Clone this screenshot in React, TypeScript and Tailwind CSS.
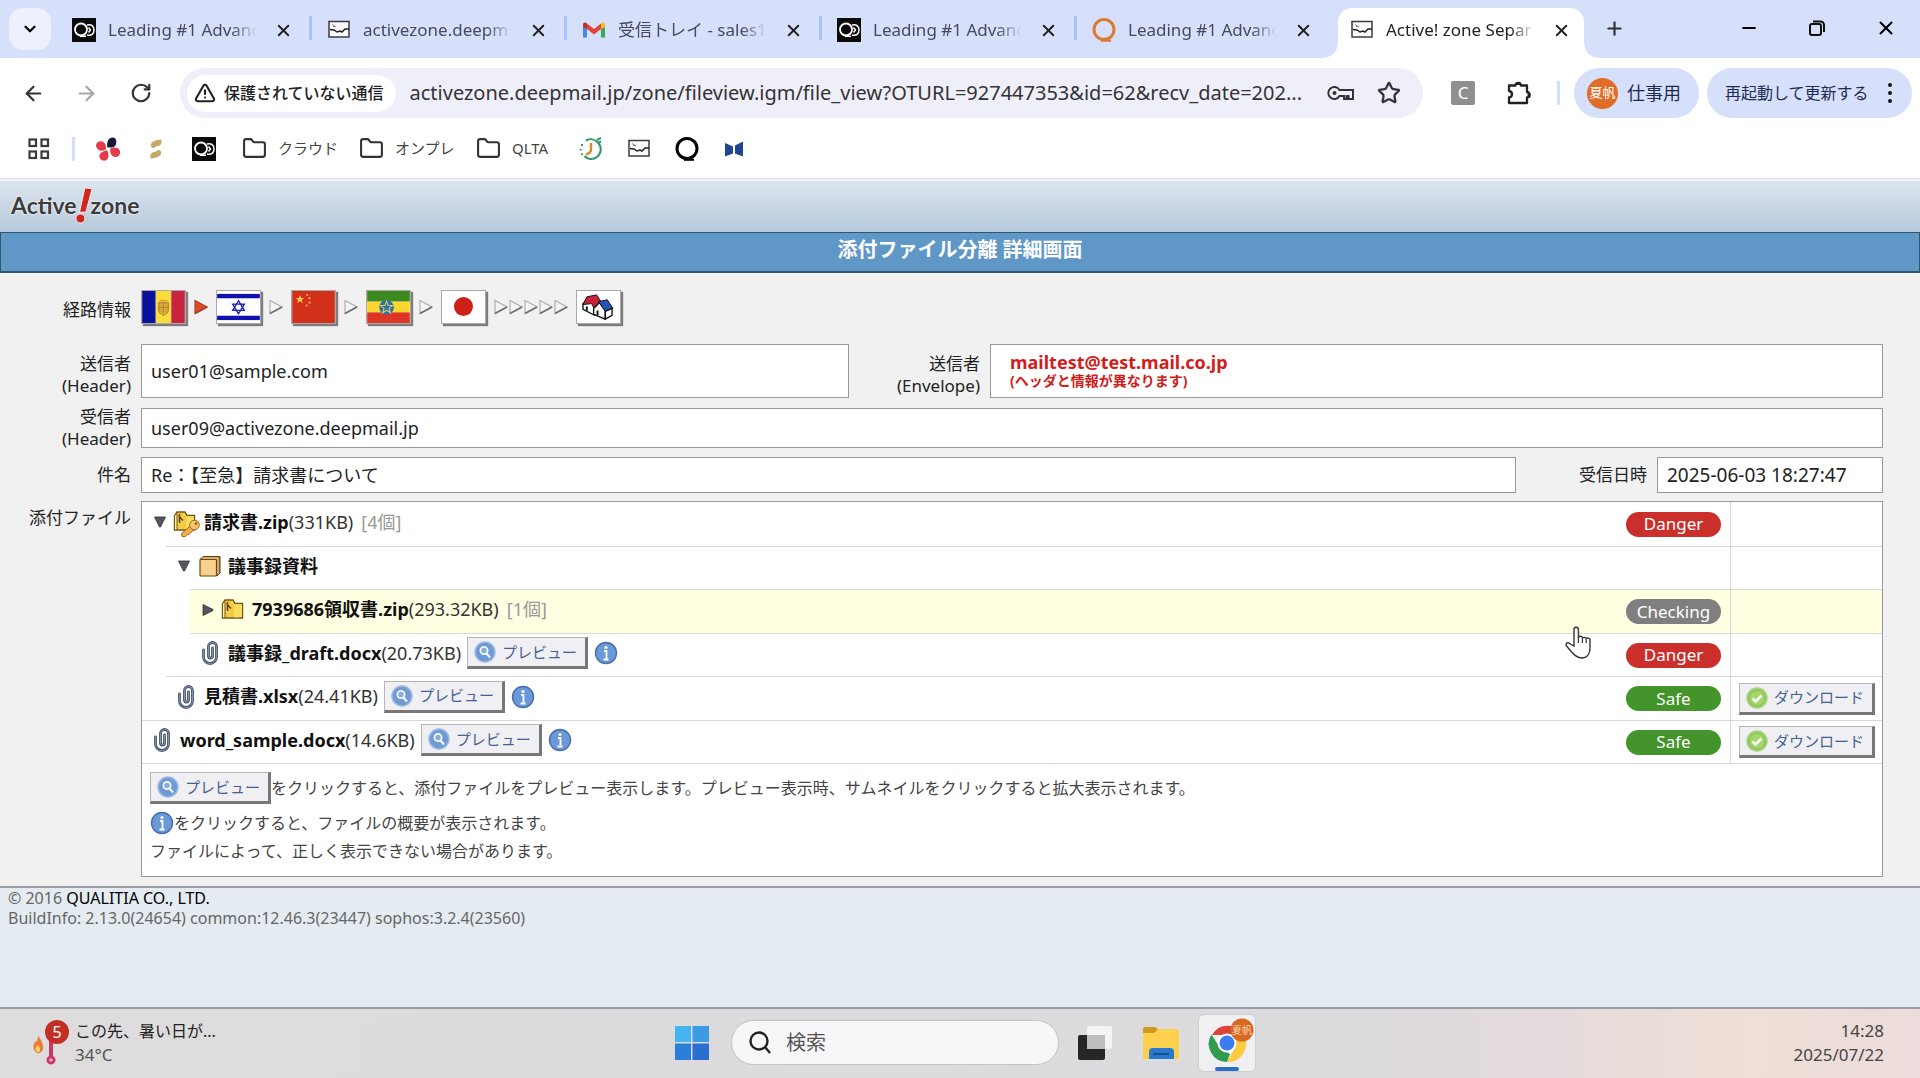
import type { ReactNode } from "react";
import {
  ArrowLeft,
  ArrowRight,
  ChevronDown,
  Folder,
  Minus,
  Plus,
  RotateCw,
  Star,
  TriangleAlert,
  X,
} from "lucide-react";

/* ---------- browser icons ---------- */

function OcIcon() {
  return (
    <svg viewBox="0 0 24 24" className="w-6 h-6 shrink-0">
      <rect width="24" height="24" fill="#0b0b0b" />
      <circle cx="9" cy="11.5" r="6" fill="none" stroke="#fff" strokeWidth="1.800" />
      <path d="M8 18.300h6" stroke="#fff" strokeWidth="1.500" />
      <path d="M15 7c5-1 7 1.500 7 5s-2 6-7 5M16.500 9.500l2 2.500-2 2.500" fill="none" stroke="#fff" strokeWidth="1.500" />
    </svg>
  );
}

function MailBoxIcon() {
  return (
    <svg viewBox="0 0 22 20" className="w-[22px] h-5 shrink-0" fill="none" stroke="#3c3c3c" strokeWidth="1.500">
      <rect x="1" y="1.500" width="20" height="15.500" fill="#fafafa" />
      <path d="M2 9.500l4 .5 3 2 3-1 2 1 3-3 4 0" stroke="#222" />
      <path d="M4 4.500l4 2.500M5 6.500h3" strokeWidth="1" stroke="#888" />
    </svg>
  );
}

function GmailIcon() {
  return (
    <svg viewBox="0 0 24 18" className="w-6 h-[18px] shrink-0">
      <path d="M1 3v13.500h4V8z" fill="#4a82ee" />
      <path d="M23 3v13.500h-4V8z" fill="#3ba757" />
      <path d="M19 8V2.500c2-2 4-1 4 1V6z" fill="#f4bc1c" />
      <path d="M5 8V2.500C3 .5 1 1.500 1 3.500V6z" fill="#b93228" />
      <path d="M5 2.500l7 5.500 7-5.500V8l-7 5.500L5 8z" fill="#e24435" />
    </svg>
  );
}

function RingIcon({ color }: { color: string }) {
  return (
    <svg viewBox="0 0 24 24" className="w-6 h-6 shrink-0">
      <circle cx="12" cy="11.500" r="10" fill="none" stroke={color} strokeWidth="3" />
      <path d="M9 22.800h10" stroke={color} strokeWidth="2" />
    </svg>
  );
}

function AppsIcon() {
  return (
    <svg viewBox="0 0 22 22" className="w-[22px] h-[22px]" fill="none" stroke="#3a3a3a" strokeWidth="2.200">
      <rect x="1.500" y="1.500" width="6.500" height="6.500" />
      <rect x="13.500" y="1.500" width="6.500" height="6.500" />
      <rect x="1.500" y="13.500" width="6.500" height="6.500" />
      <rect x="13.500" y="13.500" width="6.500" height="6.500" />
    </svg>
  );
}

function PetalIcon() {
  return (
    <svg viewBox="0 0 26 24" className="w-[26px] h-6">
      <path d="M12.500 10.500c-1-4 0-9.500 4.500-10 5-.5 5 5 3.500 8-2 2.500-5 2-8 2z" fill="#17183a" />
      <path d="M11 12C8 15 2 14 1 9c0-5 5-6 8-3.500 2 2 2 4 2 6.500z" fill="#e23b4a" />
      <path d="M12.500 13.500c1 3 2 7-1 9.500-4 2-8-1-7-5 1-3 5-4.500 8-4.500z" fill="#e23b4a" />
      <path d="M15 12c3-2 7-2 9.500 1 2 4-1 7-4 7-4 0-5.500-4-5.500-8z" fill="#e23b4a" />
    </svg>
  );
}

function SandIcon() {
  return (
    <svg viewBox="0 0 12 20" className="w-3 h-5" fill="#c5a962">
      <path d="M11.500 .5c.5 4-1 6.500-4 6.500-2 0-2 1.500-4 2C.5 9 0 5.500 2 3.500 4 1.500 8 .5 11.500.5z" />
      <path d="M.5 19.500c-.5-4 1-6.500 4-6.500 2 0 2-1.500 4-2 3 0 3.500 3.500 1.500 5.500-2 2-6 3-9.500 3z" />
    </svg>
  );
}

function ClockIcon() {
  return (
    <svg viewBox="0 0 24 24" className="w-6 h-6" fill="none" strokeWidth="2">
      <path d="M7 3.500c4-2 9-1.500 12 2 4 4.500 3.500 11-1 14.500s-10 2-12.500-1" stroke="#2f9a68" />
      <path d="M3 7v2M1.500 12v1.500M3 16.500v1.500M18 3l4-2M20 5.500l2-1" stroke="#2f9a68" />
      <path d="M12 6v6.500c0 2-2 4-5 5" stroke="#d08a2a" strokeWidth="2.400" />
    </svg>
  );
}

function BookIcon() {
  return (
    <svg viewBox="0 0 20 16" className="w-5 h-4" fill="#1f4590">
      <path d="M1 2l8 3.500v7L1 15.500z" />
      <path d="M11 4.500L19 .5v15l-8-3z" />
    </svg>
  );
}

function KeyIcon() {
  return (
    <svg viewBox="0 0 28 18" className="w-7 h-[18px]" fill="none" stroke="#333" strokeWidth="2">
      <path d="M12.500 6a6 6 0 1 0 0 6h4.500v3h2.500v-3h2v3H26V6z" />
      <circle cx="7.500" cy="9" r="2" fill="#333" stroke="none" />
    </svg>
  );
}

function PuzzleIcon() {
  return (
    <svg viewBox="0 0 26 26" className="w-[26px] h-[26px]">
      <path
        d="M3 5.500h6.500a2.700 2.700 0 0 1 5.400 0H21v6.500a2.700 2.700 0 0 1 0 5.400V23H3v-5.500c4-.5 4-6 0-6.500z"
        fill="none"
        stroke="#222"
        strokeWidth="2.300"
        strokeLinejoin="round"
      />
      <path d="M9.500 5a2.700 2.700 0 0 1 5.400 0zM21.500 12a2.700 2.700 0 0 1 0 5.400z" fill="#222" />
    </svg>
  );
}

function RestoreIcon() {
  return (
    <svg viewBox="0 0 18 18" className="w-[18px] h-[18px]" fill="none" stroke="#111" strokeWidth="2">
      <rect x="2" y="5" width="11" height="11" rx="2" />
      <path d="M5 2.500h7.500a3.500 3.500 0 0 1 3.500 3.500v7" />
    </svg>
  );
}

/* ---------- page icons ---------- */

function Flag({ title, children }: { title: string; children: ReactNode }) {
  return (
    <svg
      viewBox="0 0 44 33"
      role="img"
      aria-label={title}
      className="w-[45px] h-[34px] border border-[#a9a9a9] shadow-[2px_2px_1px_#7d7d7d] bg-white"
    >
      {children}
    </svg>
  );
}

function Andorra() {
  return (
    <Flag title="Andorra">
      <rect width="14" height="33" fill="#0a119c" />
      <rect x="14" width="16" height="33" fill="#fbdc3d" />
      <rect x="30" width="14" height="33" fill="#c8243f" />
      <circle cx="22" cy="17" r="6" fill="#d6a93c" />
      <path d="M17 12h10v7c0 4-3 5-5 6-2-1-5-2-5-6z" fill="none" stroke="#b8862c" strokeWidth="1.200" />
      <path d="M22 12v12M17 17h10M18 10h8" stroke="#b8862c" />
    </Flag>
  );
}

function Israel() {
  return (
    <Flag title="Israel">
      <rect y="3" width="44" height="4.500" fill="#0f10ae" />
      <rect y="25.500" width="44" height="4.500" fill="#0f10ae" />
      <path d="M22 10l6 10H16zM22 23.500l-6-10h12z" fill="none" stroke="#2122b4" strokeWidth="1.400" />
    </Flag>
  );
}

function China() {
  return (
    <Flag title="China">
      <rect width="44" height="33" fill="#d3301b" />
      <path d="M8 4l1.200 3.200h3.300l-2.600 2 1 3.300L8 10.500l-2.900 2 1-3.300-2.600-2h3.300z" fill="#f9c646" />
      <g fill="#f0a040">
        <circle cx="15.500" cy="4" r="1.200" />
        <circle cx="18" cy="7.500" r="1.200" />
        <circle cx="18" cy="12" r="1.200" />
        <circle cx="15" cy="15" r="1.200" />
      </g>
    </Flag>
  );
}

function Ethiopia() {
  return (
    <Flag title="Ethiopia">
      <rect width="44" height="11" fill="#3c8a1f" />
      <rect y="11" width="44" height="11" fill="#fad72f" />
      <rect y="22" width="44" height="11" fill="#de3624" />
      <circle cx="20" cy="17" r="7.500" fill="#2f6fa9" />
      <path
        d="M20 10.500l1.700 4.500h4.700l-3.800 3 1.500 4.600-4.100-2.800-4.100 2.800 1.500-4.600-3.800-3h4.700z"
        fill="none"
        stroke="#d8cf62"
        strokeWidth="1.100"
      />
    </Flag>
  );
}

function Japan() {
  return (
    <Flag title="Japan">
      <circle cx="22" cy="16" r="9.800" fill="#cf2018" />
    </Flag>
  );
}

function House() {
  return (
    <Flag title="Local">
      <path d="M6 13v6l12 6V14l-4-7z" fill="#fff" stroke="#111" strokeWidth="1.400" />
      <path d="M10 6l10-2 6 9-8 6-3-6-9 1z" fill="#c81f3a" stroke="#111" />
      <path d="M17 18l6-6 6 8v9l-12-5z" fill="#fff" stroke="#111" strokeWidth="1.400" />
      <path d="M22 11l9-2 6 9-8 3z" fill="#2453b5" stroke="#111" />
      <path d="M29 21l7-3v7l-7 4z" fill="#fff" stroke="#111" strokeWidth="1.400" />
      <path d="M10 16v4M21 20v5" stroke="#111" strokeWidth="2" />
    </Flag>
  );
}

function RouteArrow({ red = false }: { red?: boolean }) {
  return (
    <svg viewBox="0 0 14 16" className="w-3.5 h-4 shrink-0">
      <path d="M1 1.500v13L13 8z" fill={red ? "#dc4a2b" : "#f4f4f4"} />
      <path
        d="M1 1.500v13L13 8z"
        fill="none"
        stroke={red ? "#a9442c" : "#b0b0b0"}
        strokeWidth="1.200"
      />
      <path d="M1 14.500L13 8" stroke={red ? "#a9442c" : "#707070"} strokeWidth="1.800" />
    </svg>
  );
}

function Logo() {
  return (
    <a
      href="#"
      aria-label="Active! zone"
      className="flex items-center font-[Lato,sans-serif] text-[23px] leading-7 font-bold text-[#3b3b3d] [text-shadow:0_0_2px_white,0_0_2px_white]"
    >
      Active
      <svg viewBox="0 0 20 42" className="-mx-0.5 h-10 w-[18px]">
        <path d="M11 2l8 1-7 26H5z" fill="#d1261f" stroke="#f6f6f6" />
        <circle cx="6" cy="36" r="5" fill="#d1261f" stroke="#f6f6f6" />
      </svg>
      zone
    </a>
  );
}

function Caret({ open }: { open: boolean }) {
  return (
    <svg viewBox="0 0 12 12" className="w-3 h-3 shrink-0" fill="#56565c" stroke="#2e2e32" strokeWidth=".8">
      {open ? <path d="M.5 1h11L6.500 11h-1z" /> : <path d="M1 .5v11l10-5v-1z" />}
    </svg>
  );
}

function ZipIcon({ locked = false }: { locked?: boolean }) {
  return (
    <svg viewBox="0 0 28 30" className="w-7 h-[30px] shrink-0">
      <path d="M2.500 9L5 5h8l2 3.500h7.500V23h-20z" fill="#f5cb45" stroke="#75561a" strokeWidth="1.400" />
      <path d="M2.500 9L5 5.500V23H2.500z" fill="#fff1a8" stroke="#75561a" />
      <path d="M14 9l8 .5V22l-8 .5z" fill="#fbdd62" />
      <path d="M7.500 7v9M7.500 10l3.500 3.500" fill="none" stroke="#5b420f" strokeWidth="1.500" />
      {locked && (
        <g stroke="#a26a1c">
          <path d="M19 18.500L9.500 26.500l.5 3 3.500 0 1.500-2h2l5-5z" fill="#f2b04a" />
          <circle cx="22.500" cy="18" r="4.800" fill="#f7c56c" />
          <circle cx="24" cy="16.500" r="1.300" fill="#8a5510" stroke="none" />
        </g>
      )}
    </svg>
  );
}

function FolderIcon() {
  return (
    <svg viewBox="0 0 22 22" className="w-[22px] h-[22px] shrink-0">
      <path d="M1 4.500L4 1.500h17V18l-3 3z" fill="#b27b35" stroke="#5d3b12" strokeLinejoin="round" />
      <path d="M3 3h16v16" fill="none" stroke="#f5dfb4" />
      <rect x="1" y="4.500" width="16.500" height="16.500" rx="1" fill="#f9cf8c" stroke="#6e4717" strokeWidth="1.200" />
    </svg>
  );
}

function ClipIcon() {
  return (
    <svg viewBox="0 0 18 24" className="w-[18px] h-6 shrink-0" fill="none" strokeLinecap="round">
      <path d="M2.500 9v7a6.500 6.500 0 0 0 13 0V5.500a4 4 0 0 0-8 0V15a2 2 0 0 0 4 0V7" stroke="#46536b" strokeWidth="2.800" />
      <path d="M2.500 9v7a6.500 6.500 0 0 0 13 0V5.500a4 4 0 0 0-8 0V15a2 2 0 0 0 4 0V7" stroke="#93a3bd" strokeWidth=".8" />
    </svg>
  );
}

function MagnifierIcon() {
  return (
    <svg viewBox="0 0 22 22" className="w-[22px] h-[22px] shrink-0">
      <circle cx="11" cy="11" r="10" fill="#6f9ad4" stroke="#9dbbe2" strokeWidth="1.500" />
      <circle cx="10" cy="9.500" r="3.600" fill="#86abdd" stroke="#f2f7fd" strokeWidth="1.800" />
      <path d="M12.500 12.500l3.500 4" stroke="#f2f7fd" strokeWidth="2.200" />
    </svg>
  );
}

function CheckIcon() {
  return (
    <svg viewBox="0 0 22 22" className="w-[22px] h-[22px] shrink-0">
      <circle cx="11" cy="11" r="10" fill="#8fc95c" stroke="#a9d482" strokeWidth="1.500" />
      <circle cx="11" cy="11" r="7" fill="#a5d76b" />
      <path d="M6.500 11.500l3 3 6-6" fill="none" stroke="#fff" strokeWidth="2.500" />
    </svg>
  );
}

function InfoIcon() {
  return (
    <svg viewBox="0 0 24 24" className="w-6 h-6 shrink-0">
      <circle cx="12" cy="12" r="10.500" fill="#6b98d8" stroke="#4a6ea8" strokeWidth="1.400" />
      <circle cx="12" cy="6.500" r="1.500" fill="#fff" />
      <path d="M10 10h2.500v8M9.500 18.500h5" fill="none" stroke="#fff" strokeWidth="1.800" />
    </svg>
  );
}

function HandCursor() {
  return (
    <svg viewBox="0 0 26 34" className="w-[26px] h-[34px] absolute -left-[61px] top-9 z-10">
      <path
        d="M9 20V3.500a2.200 2.200 0 0 1 4.400 0V12a2 2 0 0 1 4 .5 2 2 0 0 1 3.800.8 2 2 0 0 1 3.800 1.200V22c0 6-3 10-8.500 10C12 32 9 29 1.500 20c-1.500-3 1.500-4.500 4-2z"
        fill="#fff"
        stroke="#333"
        strokeWidth="1.400"
      />
      <path d="M13.400 12v5M17.400 12.500V17M21.200 13.500V17" stroke="#333" strokeWidth="1.200" />
    </svg>
  );
}

/* ---------- browser frame ---------- */

const tabs: { title: string; icon: ReactNode; active?: boolean }[] = [
  { title: "Leading #1 Advanc", icon: <OcIcon /> },
  { title: "activezone.deepm", icon: <MailBoxIcon /> },
  { title: "受信トレイ - sales1", icon: <GmailIcon /> },
  { title: "Leading #1 Advanc", icon: <OcIcon /> },
  { title: "Leading #1 Advanc", icon: <RingIcon color="#dd7a33" /> },
  { title: "Active! zone Separ", icon: <MailBoxIcon />, active: true },
];

function TabStrip() {
  return (
    <div className="flex h-[58px] bg-[#d7e0fa] pl-[9px] text-[17px] text-[#45495a]">
      <button
        aria-label="タブを検索"
        className="mt-2 mr-[6px] flex h-[42px] w-[42px] shrink-0 items-center justify-center rounded-[14px] bg-[#edf1fd] text-black"
      >
        <ChevronDown size={18} strokeWidth={3} />
      </button>
      <div className="flex min-w-0">
        {tabs.map((tab, i) => (
          <div
            key={i}
            className={
              tab.active
                ? "relative mt-2 ml-1.5 flex h-[50px] w-[246px] items-center rounded-t-[14px] bg-white pb-1.5 pl-3 text-[#222]"
                : "relative mt-2 flex h-[50px] w-[255px] items-center pb-1.5 pl-[15px]"
            }
          >
            <span className="flex w-6 shrink-0 justify-center">{tab.icon}</span>
            <span className="ml-3 w-[154px] overflow-hidden whitespace-nowrap [mask-image:linear-gradient(to_right,black_80%,transparent_97%)]">
              {tab.title}
            </span>
            <button aria-label="閉じる" className="ml-3 text-[#222]">
              <X size={19} strokeWidth={2.5} />
            </button>
            {!tab.active && i !== 4 && (
              <span className="absolute top-2 right-0 h-6 w-[3px] bg-[#a9c4f4]" />
            )}
            {tab.active && (
              <>
                <span className="absolute bottom-0 -left-3.5 h-3.5 w-3.5 bg-[radial-gradient(circle_at_0_0,#d7e0fa_13px,white_14px)]" />
                <span className="absolute -right-3.5 bottom-0 h-3.5 w-3.5 bg-[radial-gradient(circle_at_100%_0,#d7e0fa_13px,white_14px)]" />
              </>
            )}
          </div>
        ))}
      </div>
      <button aria-label="新しいタブ" className="ml-[20px] h-14 text-[#333]">
        <Plus size={21} strokeWidth={2.5} />
      </button>
      <div className="ml-auto flex h-14 shrink-0 items-center gap-[49px] pr-[23px] text-black">
        <button aria-label="最小化">
          <Minus size={20} strokeWidth={2.5} />
        </button>
        <button aria-label="元に戻す">
          <RestoreIcon />
        </button>
        <button aria-label="ウィンドウを閉じる">
          <X size={22} strokeWidth={2.2} />
        </button>
      </div>
    </div>
  );
}

function Toolbar() {
  return (
    <div className="flex h-[70px] items-center bg-white pr-2 pl-[22px]">
      <button aria-label="戻る" className="text-[#333]">
        <ArrowLeft size={23} strokeWidth={2.3} />
      </button>
      <button aria-label="進む" className="ml-[30px] text-[#a5a5a5]">
        <ArrowRight size={23} strokeWidth={2.3} />
      </button>
      <button aria-label="再読み込み" className="ml-[32px] text-[#333]">
        <RotateCw size={22} strokeWidth={2.4} />
      </button>
      <div className="ml-[28px] flex h-[50px] min-w-0 flex-1 items-center rounded-full bg-[#efeffa] pr-[22px] pl-[7px]">
        <button className="flex h-[37px] shrink-0 items-center gap-2 rounded-full bg-white px-[7px] pr-3 text-[16px] font-medium text-[#222]">
          <TriangleAlert size={22} strokeWidth={2.3} />
          保護されていない通信
        </button>
        <input
          aria-label="アドレス"
          readOnly
          value="activezone.deepmail.jp/zone/fileview.igm/file_view?OTURL=927447353&id=62&recv_date=202..."
          className="ml-3.5 min-w-0 flex-1 bg-transparent text-[20px] text-[#333] outline-none"
        />
        <button aria-label="パスワード" className="ml-2">
          <KeyIcon />
        </button>
        <button aria-label="ブックマーク" className="ml-[22px] text-[#333]">
          <Star size={24} strokeWidth={2.3} />
        </button>
      </div>
      <button className="ml-7 flex h-6 w-6 items-center justify-center rounded-[2px] bg-[#8f8f8f] text-[17px] text-white">C</button>
      <button aria-label="拡張機能" className="ml-[31px]">
        <PuzzleIcon />
      </button>
      <span className="ml-[25px] h-6 w-[3px] bg-[#d3e0fa]" />
      <button className="ml-[14px] flex h-[50px] w-[125px] items-center gap-[9px] rounded-full bg-[#d7e0fa] pl-[13px] text-[18px] whitespace-nowrap text-[#1d2b50]">
        <span className="flex h-[31px] w-[31px] items-center justify-center rounded-full bg-[#df6d27] text-[13px] text-white">
          夏帆
        </span>
        仕事用
      </button>
      <button className="ml-2 flex h-[50px] w-[205px] items-center justify-between rounded-full bg-[#d7e0fa] pr-5 pl-[18px] text-[16px] whitespace-nowrap text-[#1d2b50]">
        再起動して更新する
        <svg viewBox="0 0 4 22" className="h-[22px] w-1" fill="#111">
          <circle cx="2" cy="3" r="2" />
          <circle cx="2" cy="11" r="2" />
          <circle cx="2" cy="19" r="2" />
        </svg>
      </button>
    </div>
  );
}

function BookmarkFolder({ label }: { label: string }) {
  return (
    <a href="#" className="flex w-[117px] items-center gap-[11px]">
      <Folder size={25} strokeWidth={2} className="text-[#333]" />
      {label}
    </a>
  );
}

function Bookmarks() {
  return (
    <div className="flex h-[51px] items-center border-b border-[#dbe2ea] bg-white pb-[9px] pl-7 text-[15px] text-[#444]">
      <a href="#" aria-label="アプリ">
        <AppsIcon />
      </a>
      <span className="ml-[22px] h-6 w-[3px] bg-[#d3e0fa]" />
      <a href="#" aria-label="Petal" className="ml-5">
        <PetalIcon />
      </a>
      <a href="#" aria-label="S" className="ml-[29px]">
        <SandIcon />
      </a>
      <a href="#" aria-label="OC" className="mr-[26px] ml-[30px]">
        <OcIcon />
      </a>
      <BookmarkFolder label="クラウド" />
      <BookmarkFolder label="オンプレ" />
      <BookmarkFolder label="QLTA" />
      <div className="ml-[-14px] flex items-center gap-[25px]">
        <a href="#" aria-label="Clock">
          <ClockIcon />
        </a>
        <a href="#" aria-label="Mail">
          <MailBoxIcon />
        </a>
        <a href="#" aria-label="Q">
          <RingIcon color="#000" />
        </a>
        <a href="#" aria-label="Book">
          <BookIcon />
        </a>
      </div>
    </div>
  );
}

/* ---------- mail detail ---------- */

function Label({ children }: { children: ReactNode }) {
  return <div className="pr-2.5 text-right leading-[22px]">{children}</div>;
}

function Field({ children, className = "" }: { children: ReactNode; className?: string }) {
  return <div className={"flex items-center border border-[#999] bg-white px-[9px] " + className}>{children}</div>;
}

function PreviewButton() {
  return (
    <button className="inline-flex h-8 w-[121px] shrink-0 items-center gap-1.5 border-t border-r-[3px] border-b-[3px] border-l border-t-[#b5b5b5] border-r-[#777] border-b-[#777] border-l-[#b5b5b5] bg-[#f0eff4] pl-1.5 text-[15px] whitespace-nowrap text-[#456391]">
      <MagnifierIcon />
      プレビュー
    </button>
  );
}

function DownloadButton() {
  return (
    <button className="flex h-8 w-[136px] items-center gap-1.5 border-t border-r-[3px] border-b-[3px] border-l border-t-[#b5b5b5] border-r-[#777] border-b-[#777] border-l-[#b5b5b5] bg-[#f0eff4] pl-1.5 text-[15px] whitespace-nowrap text-[#456391]">
      <CheckIcon />
      ダウンロード
    </button>
  );
}

type Status = "Danger" | "Checking" | "Safe";

const statusColors: Record<Status, string> = {
  Danger: "bg-[#cb2f2c]",
  Checking: "bg-[#7f7f7f]",
  Safe: "bg-[#43942b]",
};

type FileRow = {
  name: string;
  size?: string;
  count?: string;
  icon: ReactNode;
  pad: string;
  line: string;
  open?: boolean;
  preview?: boolean;
  status?: Status;
  hover?: boolean;
};

const files: FileRow[] = [
  { name: "請求書.zip", size: "331KB", count: "4個", icon: <ZipIcon locked />, pad: "pl-3", line: "", open: true, status: "Danger" },
  { name: "議事録資料", icon: <FolderIcon />, pad: "pl-3", line: "ml-6 border-t", open: true },
  { name: "7939686領収書.zip", size: "293.32KB", count: "1個", icon: <ZipIcon />, pad: "pl-3", line: "ml-12 border-t", open: false, status: "Checking", hover: true },
  { name: "議事録_draft.docx", size: "20.73KB", icon: <ClipIcon />, pad: "pl-2", line: "ml-12 border-t", preview: true, status: "Danger" },
  { name: "見積書.xlsx", size: "24.41KB", icon: <ClipIcon />, pad: "pl-2", line: "ml-6 border-t", preview: true, status: "Safe" },
  { name: "word_sample.docx", size: "14.6KB", icon: <ClipIcon />, pad: "pl-2", line: "border-t", preview: true, status: "Safe" },
];

function FileTable() {
  return (
    <table className="w-full border-collapse text-[18px]">
      <tbody>
        {files.map((f, i) => {
          const height = i % 2 === 0 ? "h-11" : "h-[43px]";
          const line = f.line ? " border-t" : "";
          const bg = f.hover ? " bg-[#ffffe1]" : "";
          return (
            <tr key={f.name}>
              <td className="p-0">
                <div
                  className={
                    "flex items-center border-[#d9d9d9] pb-1 whitespace-nowrap " +
                    height + " " + f.line + " " + f.pad + bg
                  }
                >
                  {f.open !== undefined && (
                    <button aria-label="開閉" className="mr-2">
                      <Caret open={f.open} />
                    </button>
                  )}
                  <span className="mr-1.5 flex w-6 shrink-0 justify-center">{f.icon}</span>
                  <b className="text-[#111]">{f.name}</b>
                  {f.size && <span className="text-[#333]">({f.size})</span>}
                  {f.count && <span className="ml-2 text-[#999]">[{f.count}]</span>}
                  {f.preview && (
                    <span className="ml-1.5 flex items-center gap-1.5">
                      <PreviewButton />
                      <button aria-label="概要">
                        <InfoIcon />
                      </button>
                    </span>
                  )}
                </div>
              </td>
              <td className="w-[105px] p-0">
                <div className={"relative flex items-center border-r border-[#d9d9d9] " + height + line + bg}>
                  {f.status && (
                    <span
                      className={
                        "flex h-[25px] w-[95px] items-center justify-center rounded-full text-[17px] text-white " +
                        statusColors[f.status]
                      }
                    >
                      {f.status}
                    </span>
                  )}
                  {f.hover && <HandCursor />}
                </div>
              </td>
              <td className="w-[151px] p-0">
                <div className={"flex items-center border-[#d9d9d9] pl-2 " + height + line + bg}>
                  {f.status === "Safe" && <DownloadButton />}
                </div>
              </td>
            </tr>
          );
        })}
      </tbody>
    </table>
  );
}

function MailDetail() {
  return (
    <main className="bg-[#f1f1f1] pr-[37px] pb-[9px] text-[17px] text-[#222]">
      <div className="grid grid-cols-[141px_1fr] items-center pt-[17px]">
        <div className="pt-1.5">
          <Label>経路情報</Label>
        </div>
        <div className="flex items-center gap-2">
          <Andorra />
          <RouteArrow red />
          <Israel />
          <RouteArrow />
          <China />
          <RouteArrow />
          <Ethiopia />
          <RouteArrow />
          <Japan />
          <div className="flex gap-px">
            <RouteArrow />
            <RouteArrow />
            <RouteArrow />
            <RouteArrow />
            <RouteArrow />
          </div>
          <House />
        </div>
      </div>

      <div className="mt-5 grid grid-cols-[141px_708fr_141px_893fr] items-center">
        <div className="pt-2">
          <Label>
            送信者
            <br />
            (Header)
          </Label>
        </div>
        <Field className="h-[54px] text-[18px]">user01@sample.com</Field>
        <div className="pt-2">
          <Label>
            送信者
            <br />
            (Envelope)
          </Label>
        </div>
        <Field className="h-[54px]">
          <div className="pl-2.5 font-bold text-[#d21c1c]">
            <div className="text-[18px] leading-5">mailtest@test.mail.co.jp</div>
            <div className="text-[14px] leading-[18px]">(ヘッダと情報が異なります)</div>
          </div>
        </Field>
      </div>

      <div className="mt-2 grid grid-cols-[141px_1fr] items-center">
        <Label>
          受信者
          <br />
          (Header)
        </Label>
        <Field className="h-10 text-[18px]">user09@activezone.deepmail.jp</Field>
      </div>

      <div className="mt-[7px] grid grid-cols-[141px_1fr_141px_226px] items-center">
        <Label>件名</Label>
        <Field className="h-9 text-[18px]">Re：【至急】請求書について</Field>
        <Label>受信日時</Label>
        <Field className="h-9 text-[19px]">2025-06-03 18:27:47</Field>
      </div>

      <div className="mt-2 grid grid-cols-[141px_1fr]">
        <div className="pt-1.5">
          <Label>添付ファイル</Label>
        </div>
        <div className="border border-[#999] bg-white">
          <FileTable />
          <div className="border-t border-[#d9d9d9] px-2 pt-2 pb-[9px] text-[16px] text-[#444]">
            <p className="flex items-center">
              <PreviewButton />
              をクリックすると、添付ファイルをプレビュー表示します。プレビュー表示時、サムネイルをクリックすると拡大表示されます。
            </p>
            <p className="mt-[7px] flex items-center">
              <InfoIcon />
              をクリックすると、ファイルの概要が表示されます。
            </p>
            <p className="leading-8">ファイルによって、正しく表示できない場合があります。</p>
          </div>
        </div>
      </div>
    </main>
  );
}

/* ---------- taskbar ---------- */

function WeatherIcon() {
  return (
    <svg viewBox="0 0 40 48" className="w-10 h-12">
      <path d="M6 34c-4-3-5-8-1-12 1 2 2-2 2-5 4 4 7 12 4 15-1 2-3 2-5 2z" fill="#ee7a35" />
      <path d="M6 33c-2-2-2-5 1-7 2 3 3 5 1 7z" fill="#fcd36b" />
      <path d="M18 22h4v15a4.500 4.500 0 1 1-4 0z" fill="#c9366a" />
      <circle cx="20" cy="41" r="1.800" fill="#f2a7bd" />
      <circle cx="26" cy="13" r="12" fill="#c22f26" />
      <text x="26" y="19" textAnchor="middle" fontSize="16" fill="#fff">
        5
      </text>
    </svg>
  );
}

function WindowsIcon() {
  return (
    <svg viewBox="0 0 36 36" className="w-9 h-9">
      <rect x="1" y="1" width="16" height="16" fill="#44b4ee" />
      <rect x="18.500" y="1" width="16.500" height="16" fill="#3b9be3" />
      <rect x="1" y="18.500" width="16" height="16.500" fill="#2b7fd8" />
      <rect x="18.500" y="18.500" width="16.500" height="16.500" fill="#2a6fd0" />
    </svg>
  );
}

function TaskViewIcon() {
  return (
    <svg viewBox="0 0 36 36" className="w-9 h-9">
      <rect x="1" y="10" width="27" height="25" rx="2" fill="#262626" />
      <rect x="10" y="1" width="25" height="23" rx="2" fill="#f4f4f4" />
      <rect x="10" y="10" width="18" height="14" fill="#bdbdbd" />
    </svg>
  );
}

function ExplorerIcon() {
  return (
    <svg viewBox="0 0 38 34" className="w-[38px] h-[34px]">
      <path d="M1 3a2 2 0 0 1 2-2h10l3 2-3 4H1z" fill="#d19a1f" />
      <path d="M1 7h11l4-4h19a2 2 0 0 1 2 2v26.500a1.500 1.500 0 0 1-1.500 1.500h-33A1.500 1.500 0 0 1 1 31.500z" fill="#fbd04d" />
      <path d="M7 33v-7a4 4 0 0 1 4-4h17a4 4 0 0 1 4 4v7z" fill="#2b79cf" />
      <path d="M11 28h16" stroke="#174f92" strokeWidth="2" />
    </svg>
  );
}

function ChromeIcon() {
  return (
    <svg viewBox="0 0 56 56" className="w-14 h-14">
      <path d="M13 20A18 18 0 0 1 44.500 20H28z" fill="#dc4437" />
      <path d="M44.500 20A18 18 0 0 1 28 47l8-14-1-13z" fill="#fccb40" />
      <path d="M28 47A18 18 0 0 1 12.500 19.500L21 33l10 6z" fill="#319c50" />
      <circle cx="28" cy="28" r="9.500" fill="#fff" />
      <circle cx="28" cy="28" r="7.500" fill="#3b7df0" />
      <circle cx="43" cy="15" r="11.500" fill="#d9691f" />
      <text x="43" y="19" textAnchor="middle" fontSize="10" fill="#f6d3b8">
        夏帆
      </text>
      <rect x="16" y="52" width="24" height="4" rx="2" fill="#2a6fc4" />
    </svg>
  );
}

function Taskbar() {
  return (
    <div className="grid h-[71px] grid-cols-[1fr_auto_1fr] items-center border-t-2 border-[#9b9ba3] bg-[linear-gradient(to_right,#dedcdc_0%,#dbdadd_70%,#e4dadd_80%,#eedfd6_90%,#ecdcdb_100%)] pb-0.5 text-[17px] leading-6">
      <button className="flex items-center gap-1 pl-[31px] text-left text-[#222]">
        <WeatherIcon />
        <span className="text-[16px]">
          この先、暑い日が...
          <br />
          <span className="text-[17px] text-[#555]">34°C</span>
        </span>
      </button>
      <div className="flex items-center pl-2.5">
        <button aria-label="スタート">
          <WindowsIcon />
        </button>
        <label className="ml-[21px] flex h-[45px] w-[328px] items-center gap-[14px] rounded-full border border-[#c4c2c4] bg-[#f7f6f8] pl-4">
          <svg viewBox="0 0 24 24" className="h-6 w-6" fill="none" stroke="#222" strokeWidth="2.400">
            <circle cx="11" cy="10" r="8.500" />
            <path d="M17 16l5 6" />
          </svg>
          <input
            aria-label="検索"
            placeholder="検索"
            className="w-60 bg-transparent text-[20px] outline-none placeholder:text-[#555]"
          />
        </label>
        <button aria-label="タスク ビュー" className="ml-[18px]">
          <TaskViewIcon />
        </button>
        <button aria-label="エクスプローラー" className="ml-[29px]">
          <ExplorerIcon />
        </button>
        <button aria-label="Chrome" className="ml-[18px] rounded-md border border-[#cfcfd2] bg-[#f0eff2]">
          <ChromeIcon />
        </button>
      </div>
      <div className="pr-9 text-right text-[#444]">
        14:28
        <br />
        2025/07/22
      </div>
    </div>
  );
}

export default function App() {
  return (
    <div className="flex min-h-screen flex-col font-['Noto_Sans','Noto_Sans_CJK_JP',sans-serif]">
      <TabStrip />
      <Toolbar />
      <Bookmarks />

      <header>
        <div className="flex h-[53px] items-center border-t-2 border-[#f0f3f7] bg-[linear-gradient(#dde5ef,#b5c8da)] pb-1 pl-[11px]">
          <Logo />
        </div>
        <h1 className="flex h-[41px] items-center justify-center border border-b-2 border-[#2f5673] bg-[#5f97c6] pb-1 text-[20px] font-bold text-white">
          添付ファイル分離 詳細画面
        </h1>
      </header>

      <MailDetail />

      <footer className="flex-1 border-t-2 border-[#9b9ba3] bg-[#e4ecf1] pl-2 text-[16px] leading-5 text-[#666]">
        © 2016 <a href="#" className="text-black">QUALITIA CO., LTD.</a>
        <br />
        BuildInfo: 2.13.0(24654) common:12.46.3(23447) sophos:3.2.4(23560)
      </footer>

      <Taskbar />
    </div>
  );
}
